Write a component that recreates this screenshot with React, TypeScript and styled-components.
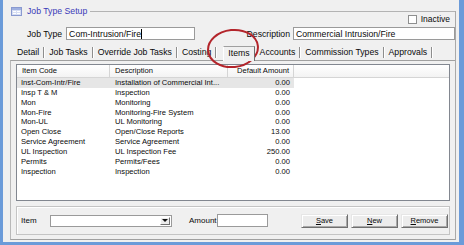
import styled, { createGlobalStyle } from "styled-components";

const GlobalStyle = createGlobalStyle`
  html, body {
    margin: 0;
    padding: 0;
  }
  body {
    font-family: "Liberation Sans", Arial, sans-serif;
    color: #0a0a0a;
  }
`;

const Screen = styled.div`
  position: relative;
  width: 464px;
  height: 245px;
  box-sizing: border-box;
  padding: 0 5px 3px 3px;
  background: #6b9bd9;
  display: flex;
  overflow: hidden;
`;

const Window = styled.div`
  flex: 1;
  display: flex;
  flex-direction: column;
  padding: 0 3px 2px 7px;
  background: #f0f0f0;
`;

const Frame = styled.div`
  flex: 1;
  display: flex;
  flex-direction: column;
  margin-top: 11px;
  border-right: 1px solid #a9a9a9;
`;

const TitleRow = styled.div`
  display: flex;
  align-items: center;
  height: 8px;
  margin-top: -4px;
  padding-left: 1px;
`;

const Title = styled.span`
  margin-left: 5px;
  font-size: 8.7px;
  line-height: 8px;
  color: #3b3bb8;
  white-space: nowrap;
`;

const TitleLine = styled.div`
  flex: 1;
  align-self: flex-start;
  height: 1px;
  margin-top: 4px;
  margin-left: 3px;
  background: #b3b3b3;
`;

const InactiveRow = styled.div`
  display: flex;
  justify-content: flex-end;
  align-items: center;
  gap: 4px;
  height: 10px;
  margin-top: -1px;
  padding-right: 5px;
  font-size: 8.5px;
`;

const CheckBox = styled.span`
  box-sizing: border-box;
  width: 9px;
  height: 9px;
  border: 1px solid #8e8f8f;
  background: #fff;
`;

const FieldRow = styled.div`
  display: flex;
  align-items: center;
  height: 13px;
  margin-top: 3px;
  padding-left: 17px;
  font-size: 8.7px;
`;

const Label = styled.span<{ $width?: number }>`
  white-space: nowrap;
  ${(p) => (p.$width ? `width: ${p.$width}px;` : "")}
`;

const TextBox = styled.div<{ $width: number; $gap?: number }>`
  box-sizing: border-box;
  flex-shrink: 0;
  display: flex;
  align-items: center;
  width: ${(p) => p.$width}px;
  height: 13px;
  margin-left: ${(p) => p.$gap ?? 0}px;
  padding-left: 2px;
  border: 1px solid #9a9a9a;
  background: #fff;
  font-size: 8.7px;
  white-space: nowrap;
  overflow: hidden;
`;

const Caret = styled.span`
  width: 0;
  height: 10px;
  border-left: 1px solid #000;
`;

const Spacer = styled.div`
  flex: 1;
`;

const TabStrip = styled.div`
  display: flex;
  align-items: flex-end;
  height: 16px;
  margin-top: 4px;
  padding-left: 2px;
  font-size: 8.7px;
`;

const Tab = styled.div<{ $active?: boolean }>`
  position: relative;
  white-space: nowrap;
  ${(p) =>
    p.$active
      ? `
    height: 14px;
    line-height: 13px;
    margin: 0 0 -1px 7px;
    padding: 0 4px;
    border: 1px solid #a0a0a0;
    border-left-color: #ffffff;
    border-right-color: #6e6e6e;
    border-bottom: none;
    background: #f0f0f0;
    z-index: 1;
  `
      : `
    height: 11px;
    line-height: 11px;
    margin-bottom: 2px;
    padding: 0 4px 0 5px;
    border-right: 1px solid #8d8d8d;
    box-shadow: 1px 0 0 #ffffff;
  `}
`;

const Panel = styled.div`
  flex: 1;
  display: flex;
  flex-direction: column;
  padding: 3px 5px 4px 5px;
  border-top: 1px solid #a0a0a0;
  border-left: 1px solid #b8b8b8;
  border-bottom: 1px solid #a0a0a0;
`;

const List = styled.div`
  flex: 1;
  border: 1px solid #828790;
  background: #fff;
  font-size: 7.6px;
  overflow: hidden;
`;

const HeaderRow = styled.div`
  display: flex;
  height: 13px;
  box-sizing: border-box;
  border-bottom: 1px solid #d5d5d5;
  background: linear-gradient(#ffffff, #f3f3f3);
`;

const HeaderCell = styled.div<{ $width: number; $right?: boolean }>`
  box-sizing: border-box;
  width: ${(p) => p.$width}px;
  padding: 0 4px 0 5px;
  line-height: 12px;
  border-right: 1px solid #d5d5d5;
  text-align: ${(p) => (p.$right ? "right" : "left")};
  white-space: nowrap;
`;

const Row = styled.div<{ $selected?: boolean }>`
  display: flex;
  width: 277px;
  height: 9.85px;
  line-height: 9.85px;
  background: ${(p) => (p.$selected ? "#e6e6e6" : "transparent")};
`;

const Cell = styled.div<{ $width: number; $right?: boolean; $pad?: number }>`
  box-sizing: border-box;
  width: ${(p) => p.$width}px;
  padding-left: ${(p) => p.$pad ?? 4}px;
  padding-right: ${(p) => (p.$right ? 4 : 0)}px;
  text-align: ${(p) => (p.$right ? "right" : "left")};
  white-space: nowrap;
  overflow: hidden;
`;

const BottomBox = styled.div`
  display: flex;
  align-items: center;
  height: 29px;
  box-sizing: border-box;
  margin-top: 5px;
  padding: 0 1px 0 4px;
  border: 1px solid #c4c4c4;
  box-shadow: inset 1px 1px 0 #ffffff;
  font-size: 8px;
`;

const Combo = styled.div`
  box-sizing: border-box;
  display: flex;
  justify-content: flex-end;
  width: 122px;
  height: 12px;
  padding: 1px;
  border: 1px solid #9a9a9a;
  background: #fff;
`;

const ComboButton = styled.div`
  box-sizing: border-box;
  display: flex;
  align-items: center;
  justify-content: center;
  width: 10px;
  height: 100%;
  border: 1px solid;
  border-color: #ffffff #707070 #707070 #ffffff;
  background: #ececec;
`;

const Arrow = styled.span`
  width: 0;
  height: 0;
  border-left: 3px solid transparent;
  border-right: 3px solid transparent;
  border-top: 3px solid #111;
`;

const AmountLabel = styled(Label)`
  margin-left: 17px;
`;

const Buttons = styled.div`
  display: flex;
  gap: 3px;
  margin-left: auto;
`;

const Button = styled.div`
  box-sizing: border-box;
  width: 47px;
  height: 14px;
  line-height: 12px;
  text-align: center;
  font-size: 7.5px;
  border: 1px solid;
  border-color: #e6e6e6 #6f6f6f #6f6f6f #e6e6e6;
  box-shadow: inset 1px 1px 0 #ffffff, inset -1px -1px 0 #a8a8a8;
  background: #ececec;

  u {
    text-decoration: underline;
    text-underline-offset: 1px;
  }
`;

// hand-drawn red circle around the Items tab
const Annotation = styled.svg`
  position: absolute;
  left: 206px;
  top: 28px;
  pointer-events: none;
`;

const FormIcon = () => (
  <svg width="11" height="9" viewBox="0 0 11 9">
    <rect x="0.5" y="0.5" width="10" height="8" fill="#d6def3" stroke="#8a9ad0" />
    <rect x="1" y="1" width="9" height="2" fill="#9fb0e0" />
    <rect x="2" y="4" width="3" height="1" fill="#ffffff" />
    <rect x="6" y="4" width="3" height="1" fill="#ffffff" />
    <rect x="2" y="6" width="3" height="1" fill="#ffffff" />
    <rect x="6" y="6" width="3" height="1" fill="#ffffff" />
  </svg>
);

const tabs = [
  "Detail",
  "Job Tasks",
  "Override Job Tasks",
  "Costing",
  "Items",
  "Accounts",
  "Commission Types",
  "Approvals",
];

const items = [
  { code: "Inst-Com-Intr/Fire", desc: "Installation of Commercial Int...", amount: "0.00" },
  { code: "Insp T & M", desc: "Inspection", amount: "0.00" },
  { code: "Mon", desc: "Monitoring", amount: "0.00" },
  { code: "Mon-Fire", desc: "Monitoring-Fire System", amount: "0.00" },
  { code: "Mon-UL", desc: "UL Monitoring", amount: "0.00" },
  { code: "Open Close", desc: "Open/Close Reports", amount: "13.00" },
  { code: "Service Agreement", desc: "Service Agreement", amount: "0.00" },
  { code: "UL Inspection", desc: "UL Inspection Fee", amount: "250.00" },
  { code: "Permits", desc: "Permits/Fees", amount: "0.00" },
  { code: "Inspection", desc: "Inspection", amount: "0.00" },
];

const App = () => {
  return (
    <Screen>
      <GlobalStyle />
      <Window>
        <Frame>
          <TitleRow>
            <FormIcon />
            <Title>Job Type Setup</Title>
            <TitleLine />
          </TitleRow>
          <InactiveRow>
            <CheckBox />
            <span>Inactive</span>
          </InactiveRow>
          <FieldRow>
            <Label>Job Type</Label>
            <TextBox $width={129} $gap={4}>
              Com-Intrusion/Fire
              <Caret />
            </TextBox>
            <Spacer />
            <Label>Description</Label>
            <TextBox $width={162} $gap={3}>
              Commercial Intrusion/Fire
            </TextBox>
          </FieldRow>
          <TabStrip>
            {tabs.map((t) => (
              <Tab key={t} $active={t === "Items"}>
                {t}
              </Tab>
            ))}
          </TabStrip>
          <Panel>
            <List>
              <HeaderRow>
                <HeaderCell $width={93}>Item Code</HeaderCell>
                <HeaderCell $width={118}>Description</HeaderCell>
                <HeaderCell $width={66} $right>
                  Default Amount
                </HeaderCell>
              </HeaderRow>
              {items.map((it, i) => (
                <Row key={it.code + i} $selected={i === 0}>
                  <Cell $width={93}>{it.code}</Cell>
                  <Cell $width={118} $pad={5}>
                    {it.desc}
                  </Cell>
                  <Cell $width={66} $right>
                    {it.amount}
                  </Cell>
                </Row>
              ))}
            </List>
            <BottomBox>
              <Label $width={29}>Item</Label>
              <Combo>
                <ComboButton>
                  <Arrow />
                </ComboButton>
              </Combo>
              <AmountLabel $width={28}>Amount</AmountLabel>
              <TextBox $width={51} />
              <Buttons>
                <Button>
                  <u>S</u>ave
                </Button>
                <Button>
                  <u>N</u>ew
                </Button>
                <Button>
                  <u>R</u>emove
                </Button>
              </Buttons>
            </BottomBox>
          </Panel>
        </Frame>
      </Window>
      <Annotation width="54" height="41" viewBox="0 0 54 41">
        <ellipse
          cx="27"
          cy="20.5"
          rx="25"
          ry="18.5"
          fill="none"
          stroke="#b3252b"
          strokeWidth="2"
          transform="rotate(-6 27 20.5)"
        />
      </Annotation>
    </Screen>
  );
};

export default App;
